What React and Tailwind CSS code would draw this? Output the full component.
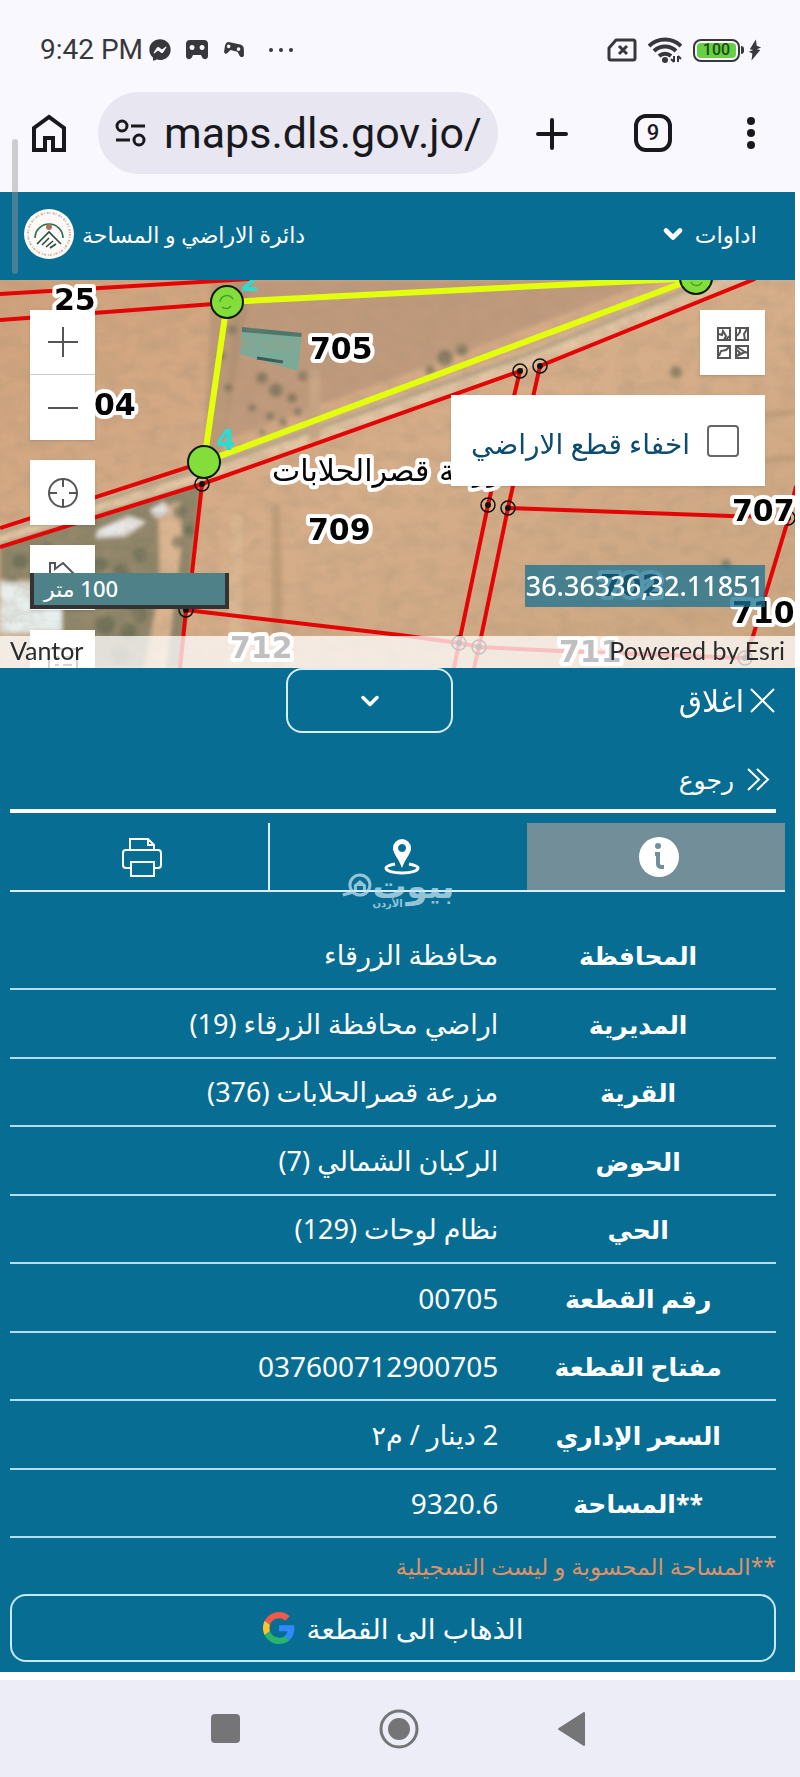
import { useState } from 'react';
import { ChevronDown } from 'lucide-react';
import { FaFacebookMessenger } from 'react-icons/fa';

const PARCEL_ROWS = [
  { label: 'المحافظة', value: 'محافظة الزرقاء' },
  { label: 'المديرية', value: 'اراضي محافظة الزرقاء (19)' },
  { label: 'القرية', value: 'مزرعة قصرالحلابات (376)' },
  { label: 'الحوض', value: 'الركبان الشمالي (7)' },
  { label: 'الحي', value: 'نظام لوحات (129)' },
  { label: 'رقم القطعة', value: '00705', numeric: true },
  { label: 'مفتاح القطعة', value: '037600712900705', numeric: true },
  { label: 'السعر الإداري', value: '2 دينار / م٢' },
  { label: '**المساحة', value: '9320.6', numeric: true },
];

const BOUNDARIES = [
  '0,14 250,-1',
  '0,40 227,23',
  '0,248 204,182',
  '0,267 202,204 520,91 488,225 459,363 454,388',
  '755,-1 540,86 508,228 479,367 474,388',
  '508,228 730,236 790,237',
  '796,206 788,240 753,356 745,378',
  '202,204 192,293 186,330 180,388',
  '186,330 400,355 459,363 479,367 560,371 745,378',
];

const MARKERS = [
  [202, 204],
  [186, 330],
  [520, 91],
  [540, 86],
  [488, 225],
  [508, 228],
  [459, 363],
  [479, 367],
  [788, 238],
  [745, 378],
];

const PARCEL_LABELS = [
  { x: 54, y: 30, text: '25' },
  { x: 310, y: 79, text: '705' },
  { x: 94, y: 135, text: '04' },
  { x: 308, y: 260, text: '709' },
  { x: 230, y: 378, text: '712' },
  { x: 732, y: 241, text: '707' },
  { x: 600, y: 316, text: '702' },
  { x: 732, y: 343, text: '710' },
  { x: 559, y: 382, text: '711' },
];

const TREES = [
  [20, 282, 8], [48, 270, 7], [70, 290, 9], [12, 305, 7], [100, 285, 8], [122, 292, 9], [140, 275, 7],
  [108, 310, 8], [130, 320, 9], [148, 305, 7], [105, 345, 10], [128, 352, 9], [140, 335, 8], [120, 375, 10],
  [262, 98, 6], [276, 110, 7], [292, 118, 5], [303, 96, 5], [228, 108, 4], [252, 128, 4], [270, 136, 4],
  [232, 50, 5], [222, 76, 4], [298, 132, 4], [283, 142, 4], [262, 152, 3], [180, 232, 7], [190, 250, 6],
  [178, 262, 6], [445, 78, 8], [462, 70, 6], [430, 90, 5], [676, 92, 6], [726, 284, 5],
];

function StatusBar() {
  return (
    <div className="flex h-24 items-center justify-between pl-10 pr-[38px] pt-1 text-[#38383c]">
      <div className="flex items-center">
        <span className="text-[28px] leading-8">9:42 PM</span>
        <FaFacebookMessenger className="ml-[6px] h-[22px] w-[22px]" />
        <svg className="ml-[14px] h-5 w-6" viewBox="0 0 24 20" fill="currentColor">
          <path
            fillRule="evenodd"
            d="M5 0h14a4 4 0 0 1 4 4v12c0 4-5 4-6 1l-1-2H8l-1 2c-1 3-6 3-6-1V4a4 4 0 0 1 4-4ZM7 5a2.500 2.500 0 1 0 .1 0ZM17 5a2.500 2.500 0 1 0 .1 0Z"
          />
        </svg>
        <svg className="ml-[14px] h-[18px] w-[22px]" viewBox="0 0 24 20" fill="currentColor">
          <path
            fillRule="evenodd"
            d="M6 1l13 3c3 1 4 3 4 6v6c-1 3-4 2-5 0l-2-4-8-2-3 3c-2 2-4 1-4-1l1-7c1-3 2-4 4-4ZM6 4a2 2 0 1 0 .1 0ZM17 7a2 2 0 1 0 .1 0Z"
          />
        </svg>
        <svg className="ml-[22px] h-5 w-7" viewBox="0 0 28 20" fill="currentColor">
          <circle cx="4" cy="10" r="2" />
          <circle cx="14" cy="10" r="2" />
          <circle cx="24" cy="10" r="2" />
        </svg>
      </div>
      <div className="flex items-center">
        <svg className="h-6 w-[30px]" viewBox="0 0 30 24" fill="none" stroke="currentColor" strokeWidth="3">
          <path d="M9 2h17a2 2 0 0 1 2 2v16a2 2 0 0 1-2 2H4a2 2 0 0 1-2-2v-10Z" strokeLinejoin="round" />
          <path d="M12 8l8 8M20 8l-8 8" />
        </svg>
        <svg className="ml-[11px] h-[26px] w-[34px]" viewBox="0 0 34 26" fill="none" stroke="currentColor" strokeWidth="4">
          <path d="M1 9a23 23 0 0 1 32 0" />
          <path d="M6 14a16 16 0 0 1 22 0" />
          <path d="M11 19a9 9 0 0 1 12 0" />
          <circle cx="17" cy="23" r="3" fill="currentColor" stroke="none" />
          <path d="M26 19v6M30 19v6" strokeWidth="2" />
          <path d="M23 22l3 3M33 22l-3-3" strokeWidth="2" />
        </svg>
        <div className="ml-[11px] flex h-[23px] w-[47px] items-center justify-center rounded-lg border-[2px] border-[#38383c] p-[2px]">
          <span className="flex h-full w-full items-center justify-center rounded bg-[#67cf43] text-base leading-4 font-medium text-[#1d4a14]">
            100
          </span>
        </div>
        <span className="ml-px h-2 w-[3px] rounded-r bg-[#38383c]" />
        <svg className="ml-1 h-6 w-[14px]" viewBox="0 0 16 24" fill="currentColor">
          <path d="M9 0L2 11l4 1-5 2 4 2-1 8 10-12-4-1 5-2-5-2Z" />
        </svg>
      </div>
    </div>
  );
}

function BrowserBar() {
  return (
    <div className="flex h-24 items-start text-[#19191d]">
      <button type="button" aria-label="Home" className="ml-8 mt-[18px]">
        <svg className="h-10 w-[34px]" viewBox="0 0 34 40" fill="none" stroke="currentColor" strokeWidth="4">
          <path d="M2 36V14L17 3l15 11v22H21V24h-8v12Z" />
        </svg>
      </button>
      <div className="ml-8 -mt-1 flex h-[82px] min-w-0 flex-1 items-center rounded-full bg-[#e7e6f1] pl-4 pr-[10px]">
        <svg className="h-7 w-8 shrink-0" viewBox="0 0 32 28" fill="none" stroke="currentColor" strokeWidth="3">
          <circle cx="8" cy="7" r="5" />
          <path d="M17 7h14M2 21h14" />
          <circle cx="25" cy="21" r="5" />
        </svg>
        <input
          type="text"
          aria-label="Address"
          defaultValue="maps.dls.gov.jo/"
          className="ml-[18px] min-w-0 flex-1 bg-transparent text-[43px] leading-[56px] outline-none"
        />
      </div>
      <button type="button" aria-label="New tab" className="ml-9 mt-5">
        <svg className="h-9 w-9" viewBox="0 0 36 36" stroke="currentColor" strokeWidth="4" strokeLinecap="round">
          <path d="M4 18h28M18 4v28" />
        </svg>
      </button>
      <button
        type="button"
        className="ml-16 mt-[18px] flex h-[38px] w-[38px] items-center justify-center rounded-xl border-[4px] border-current text-[22px] leading-6 font-medium"
      >
        9
      </button>
      <button type="button" aria-label="Menu" className="ml-[73px] mr-[43px] mt-[19px]">
        <svg className="h-9 w-3" viewBox="0 0 12 36" fill="currentColor">
          <circle cx="6" cy="6" r="4" />
          <circle cx="6" cy="18" r="4" />
          <circle cx="6" cy="30" r="4" />
        </svg>
      </button>
    </div>
  );
}

function DepartmentLogo() {
  return (
    <svg className="h-[50px] w-[50px]" viewBox="0 0 50 50" fill="none">
      <circle cx="25" cy="25" r="25" fill="#fbfaf6" />
      <circle cx="25" cy="25" r="21" stroke="#c49a8c" strokeWidth="2" strokeDasharray="2 1 1 2" opacity=".7" />
      <path d="M11 29a14 14 0 1 1 28 0" stroke="#2f6b52" strokeWidth="1.600" />
      <circle cx="25" cy="18" r="3" fill="#a9745c" />
      <path d="M13 35l12-12 12 12M18 36l7-7M22 38l7-6M26 39l6-4" stroke="#2c4c44" strokeWidth="1.600" />
    </svg>
  );
}

function SiteHeader() {
  return (
    <header dir="rtl" className="flex h-[88px] items-center justify-between bg-[#076d93] pb-1 pl-6 pr-[38px] text-white">
      <button type="button" className="flex items-center gap-2 text-[23px] leading-8">
        اداوات
        <ChevronDown className="h-7 w-7" strokeWidth={4} />
      </button>
      <div className="flex items-center gap-2 text-[22px] leading-8">
        <span>دائرة الاراضي و المساحة</span>
        <DepartmentLogo />
      </div>
    </header>
  );
}

function Aerial() {
  return (
    <svg className="absolute inset-0 h-full w-full" viewBox="0 0 796 388" preserveAspectRatio="xMinYMin slice">
      <defs>
        <filter id="soil" x="0" y="0" width="100%" height="100%">
          <feTurbulence type="fractalNoise" baseFrequency="0.05 0.07" numOctaves="4" seed="8" />
          <feColorMatrix values="0 0 0 0 .42  0 0 0 0 .3  0 0 0 0 .2  1.600 0 0 0 -.62" />
        </filter>
        <filter id="soft">
          <feGaussianBlur stdDeviation="2" />
        </filter>
        <linearGradient id="ground" x1="0" y1="0" x2="1" y2="1">
          <stop offset="0" stopColor="#cfa27c" />
          <stop offset=".5" stopColor="#d6ae89" />
          <stop offset="1" stopColor="#cba681" />
        </linearGradient>
      </defs>
      <rect width="796" height="388" fill="url(#ground)" />
      <g filter="url(#soft)">
        <path d="M235 0h420L400 96 225 160Z" fill="#b39077" opacity=".6" />
        <path d="M212 0h40l-30 175-18 4Z" fill="#a48a6b" opacity=".5" />
        <path d="M0 264L202 202 180 388H0Z" fill="#8d8468" />
        <path d="M0 300h62v88H0Z" fill="#cdb598" />
        <path d="M158 228l22-6 2 40-16 126h-22l16-80Z" fill="#d9b490" />
        <path d="M232 235l10 0 0 153h-14Z" fill="#dcbb97" opacity=".7" />
        <path d="M272 225l8 0 4 163h-12Z" fill="#ab8d68" opacity=".5" />
        <path d="M-5 257L203 193 525 80 760-14" fill="none" stroke="#e2c5a3" strokeWidth="17" />
        <path d="M-5 254L203 188 525 75 760-20" fill="none" stroke="#8b8368" strokeWidth="4" opacity=".7" />
        <path d="M310 90l10 0 0 70-12 3Z" fill="#c9a785" />
        <path d="M640 148l156-16M620 190l176-12" stroke="#a98a5f" strokeWidth="3" opacity=".6" />
        {TREES.map(([x, y, r]) => (
          <circle key={`${x}-${y}`} cx={x} cy={y} r={r} fill="#5f6650" opacity=".6" />
        ))}
        <path d="M98 250l30-14 18 6-20 14-30 2ZM150 230l14-8 6 10-14 6Z" fill="#e8e6e4" />
        <path d="M0 302l44 2 18 12v36H0Z" fill="#e6efee" />
      </g>
      <path d="M242 47l60 6-4 38-58-17Z" fill="#79ab99" />
      <path d="M242 47l60 6-1 4-59-5Z" fill="#4e766b" />
      <path d="M257 78l26 4" stroke="#3e5a55" strokeWidth="3" />
      <rect width="796" height="388" filter="url(#soil)" opacity=".45" />
    </svg>
  );
}

function ParcelLayer() {
  return (
    <svg className="absolute inset-0 h-full w-full" viewBox="0 0 796 388" preserveAspectRatio="xMinYMin slice">
      <g fill="none" stroke="#e30505" strokeWidth="4">
        {BOUNDARIES.map((points) => (
          <polyline key={points} points={points} />
        ))}
      </g>
      {MARKERS.map(([x, y]) => (
        <g key={`${x}-${y}`}>
          <circle cx={x} cy={y} r="7" fill="none" stroke="#111" strokeWidth="1.500" />
          <circle cx={x} cy={y} r="3" fill="#111" />
        </g>
      ))}
      <path d="M204 182L227 22 696-2Z" fill="none" stroke="#e2ff0c" strokeWidth="6" />
      <g fill="#83dd3a" stroke="#0e1a08" strokeWidth="2">
        <circle cx="227" cy="22" r="16" />
        <circle cx="204" cy="182" r="16" />
        <circle cx="696" cy="-2" r="16" />
      </g>
      <path d="M220 22a7 7 0 0 1 13-3M222 27a6 6 0 0 0 9-1M691 2a6 6 0 0 0 11 0" fill="none" stroke="#4ba02b" strokeWidth="1.500" />
      <g className="font-['DejaVu_Sans'] text-[28px] font-bold" fill="#2edbd3">
        <text x="240" y="11">2</text>
        <text x="216" y="170">4</text>
      </g>
      <g
        className="font-['DejaVu_Sans'] text-[30px] font-bold"
        fill="#050505"
        stroke="#fff"
        strokeWidth="8"
        strokeLinejoin="round"
        paintOrder="stroke"
      >
        {PARCEL_LABELS.map(({ x, y, text }) => (
          <text key={text} x={x} y={y}>
            {text}
          </text>
        ))}
        <text x="272" y="201" className="text-[30px] font-normal">
          مزرعة قصرالحلابات
        </text>
      </g>
    </svg>
  );
}

function MapButton({ label, children }) {
  return (
    <button type="button" aria-label={label} className="flex h-[65px] w-[65px] items-center justify-center bg-white text-[#555]">
      <svg className="h-9 w-9" viewBox="0 0 36 36" fill="none" stroke="currentColor" strokeWidth="2">
        {children}
      </svg>
    </button>
  );
}

function MapView() {
  const [hidden, setHidden] = useState(false);

  return (
    <section className="relative h-[388px] overflow-hidden">
      <Aerial />
      <ParcelLayer />

      <div className="absolute left-[30px] top-[30px] flex flex-col gap-5">
        <div className="divide-y divide-[#ccc] shadow">
          <MapButton label="Zoom in">
            <path d="M3 18h30M18 3v30" />
          </MapButton>
          <MapButton label="Zoom out">
            <path d="M3 18h30" />
          </MapButton>
        </div>
        <div className="shadow">
          <MapButton label="Locate">
            <circle cx="18" cy="18" r="14" />
            <path d="M18 4v8M18 24v8M4 18h8M24 18h8" />
          </MapButton>
        </div>
        <div className="shadow">
          <MapButton label="Default extent">
            <path d="M5 18V3h5v6l8-6 14 14M8 16v16h7v-9h7v9h7V16" />
          </MapButton>
        </div>
        <div className="shadow">
          <MapButton label="Legend">
            <path d="M4 4h28v28H4ZM10 12h4M18 12h9M10 20h4M18 20h9" />
          </MapButton>
        </div>
      </div>

      <div className="absolute left-[30px] top-[293px] h-9 w-[199px] border-x-[4px] border-b-[4px] border-[#333] bg-[#4e8288] pl-[10px] text-[22px] leading-[30px] font-medium whitespace-nowrap text-white">
        <span dir="rtl" className="inline-block">
          100 متر
        </span>
      </div>

      <div className="absolute right-[30px] top-[30px] flex flex-col items-end gap-5">
        <div className="shadow">
          <MapButton label="Basemaps">
            <path d="M3 3h12v12H3ZM21 3h12v12H21ZM3 21h12v12H3ZM21 21h12v12H21Z" />
            <path d="M4 9l3 1 1-4 3 5-2 4M11 15l3-4M25 3v4l-3 4M32 4l-3 5 1 6M4 31l2-5 5-1 4-4M22 22l8 5 3 1M22 31l8-4M22 25l3 3-3 3" />
          </MapButton>
        </div>
        <label dir="rtl" className="flex h-[91px] w-[314px] items-center gap-[17px] bg-white pr-[26px] text-[28px] whitespace-nowrap text-[#0d4c70] shadow">
          <input
            type="checkbox"
            checked={hidden}
            onChange={(e) => setHidden(e.target.checked)}
            className="h-8 w-8 shrink-0 appearance-none rounded border-2 border-[#666] bg-white checked:bg-[#076d93]"
          />
          <span className="pt-1">اخفاء قطع الاراضي</span>
        </label>
      </div>

      <div className="absolute right-[30px] top-[285px] bg-[#1a7192]/75 px-px text-[27px] leading-[42px] font-medium text-white">
        36.36336,32.11851
      </div>

      <div className="absolute inset-x-0 bottom-0 flex h-8 items-center justify-between bg-white/75 px-[10px] pb-1 font-[Lato] text-[25px] leading-7 text-[#2b2b2b]">
        <span>Vantor</span>
        <span>Powered by Esri</span>
      </div>
    </section>
  );
}

function Watermark() {
  return (
    <div dir="ltr" className="pointer-events-none absolute left-1/2 top-[50px] flex -translate-x-1/2 items-start text-[#c3e2f0] opacity-75">
      <svg className="h-6 w-8" viewBox="0 0 32 24" fill="none" stroke="currentColor" strokeWidth="3">
        <circle cx="19" cy="12" r="10" />
        <path d="M12 19l-10 3" />
        <path d="M13 12l6-5 6 5v5h-3v-4h-6v4h-3Z" fill="currentColor" stroke="none" />
      </svg>
      <span className="flex flex-col">
        <span className="text-[34px] leading-6 font-bold">بيوت</span>
        <span className="text-[10px] leading-3 font-bold">الأردن</span>
      </span>
    </div>
  );
}

function Tabs() {
  return (
    <div className="relative mr-[10px] ml-[10px] mt-[10px]">
      <div className="grid h-[69px] grid-cols-3 border-b-2 border-[#d9edf6]">
        <button type="button" aria-label="معلومات" className="flex items-center justify-center bg-[#718e99] pl-[6px]">
          <svg className="h-10 w-10" viewBox="0 0 40 40" fill="none">
            <circle cx="20" cy="20" r="20" fill="#fff" />
            <circle cx="19" cy="9" r="3" fill="#718e99" />
            <path d="M16 17h3v10q0 3 4 3h2" stroke="#718e99" strokeWidth="4" />
          </svg>
        </button>
        <button type="button" aria-label="الموقع" className="flex items-center justify-center border-l-2 border-[#d9edf6] pl-[6px]">
          <svg className="h-9 w-9" viewBox="0 0 36 36" fill="none">
            <path d="M11 25c-5 1-9 2-9 4 0 3 7 5 16 5s16-2 16-5c0-2-4-3-9-4" stroke="#fff" strokeWidth="3" />
            <path
              fillRule="evenodd"
              fill="#fff"
              d="M18 0a9 9 0 0 1 9 9c0 6-5 9-9 20C14 18 9 15 9 9a9 9 0 0 1 9-9Zm0 5a4 4 0 1 0 .1 0Z"
            />
          </svg>
        </button>
        <button type="button" aria-label="طباعة" className="flex items-center justify-center pl-[6px]">
          <svg className="h-10 w-[42px]" viewBox="0 0 42 40" fill="none" stroke="#fff" strokeWidth="2">
            <path d="M9 12V2h18l6 6v4M27 2v6h6" />
            <path d="M9 31H5a3 3 0 0 1-3-3V16a3 3 0 0 1 3-3h32a3 3 0 0 1 3 3v12a3 3 0 0 1-3 3h-4" />
            <path d="M10 25h23v14H10Z" />
          </svg>
        </button>
      </div>
      <Watermark />
    </div>
  );
}

function GoogleIcon() {
  return (
    <svg className="h-8 w-8" viewBox="0 0 48 48">
      <path fill="#f2594b" d="M24 9.500c3.500 0 6.700 1.200 9.200 3.600l6.900-6.900C35.900 2.400 30.500 0 24 0 14.600 0 6.500 5.400 2.600 13.200l8 6.200C12.400 13.700 17.700 9.500 24 9.500z" />
      <path fill="#2f8bfd" d="M47 24.600c0-1.600-.2-3.100-.4-4.600H24v9h12.900c-.6 3-2.300 5.500-4.800 7.200l7.700 6C44.400 38 47 31.800 47 24.600z" />
      <path fill="#fbc62c" d="M10.500 28.600c-.5-1.500-.8-3-.8-4.600s.3-3.100.8-4.600l-8-6.200C.9 16.500 0 20.100 0 24s.9 7.500 2.600 10.800z" />
      <path fill="#27b46c" d="M24 48c6.500 0 11.900-2.100 15.900-5.800l-7.700-6c-2.200 1.500-4.900 2.300-8.200 2.300-6.300 0-11.600-4.200-13.500-9.900l-8 6.200C6.500 42.600 14.600 48 24 48z" />
    </svg>
  );
}

function DetailsPanel() {
  return (
    <section dir="rtl" className="bg-[#076d93] pb-[10px] text-white">
      <div className="relative flex h-[65px] items-center pr-5">
        <button type="button" className="flex items-center gap-[6px] text-[30px] leading-8">
          <svg className="h-[25px] w-[25px]" viewBox="0 0 25 25" stroke="#fff" strokeWidth="2">
            <path d="M1 1l23 23M24 1L1 24" />
          </svg>
          اغلاق
        </button>
        <button
          type="button"
          aria-label="تصغير"
          className="absolute inset-y-0 left-[36%] flex w-[21%] items-center justify-center rounded-2xl border-2 border-[#d9edf6]"
        >
          <ChevronDown className="h-7 w-7" strokeWidth={3} />
        </button>
      </div>

      <div className="ml-[10px] mr-[19px] flex h-20 items-center border-b-[4px] border-white pr-[6px] pt-4">
        <button type="button" className="flex items-center gap-3 text-[25px] leading-8">
          <svg className="h-[23px] w-6" viewBox="0 0 24 23" fill="none" stroke="#fff" strokeWidth="2">
            <path d="M2 1l11 10.500L2 22M11 1l11 10.500L11 22" />
          </svg>
          رجوع
        </button>
      </div>

      <Tabs />

      <div className="ml-[10px] mr-[19px] mt-[29px]">
        <table className="w-full border-collapse leading-9">
          <tbody>
            {PARCEL_ROWS.map(({ label, value, numeric }) => (
              <tr key={label} className="border-b-2 border-[#b4deee] odd:h-[68px] even:h-[69px]">
                <th scope="row" className="w-[36%] p-0 text-center text-[25px] font-bold whitespace-nowrap">
                  {label}
                </th>
                <td className={numeric ? 'p-0 pr-[2px] text-[28px]' : 'p-0 pr-[2px] text-[27px]'}>{value}</td>
              </tr>
            ))}
          </tbody>
        </table>
        <p className="pt-3 text-[23px] leading-8 text-[#de9268]">**المساحة المحسوبة و ليست التسجيلية</p>
        <button
          type="button"
          className="mt-3 flex h-[68px] w-full items-center justify-center gap-3 rounded-2xl border-2 border-[#c5eaf8] text-[28px] leading-8"
        >
          الذهاب الى القطعة
          <GoogleIcon />
        </button>
      </div>
    </section>
  );
}

function NavigationBar() {
  return (
    <nav className="flex h-[97px] items-center justify-center gap-[139px] bg-[#ecedf7] pr-[3px] text-[#757578]">
      <button type="button" aria-label="Recent apps" className="h-[29px] w-[29px] rounded bg-current" />
      <button type="button" aria-label="Home">
        <svg className="h-10 w-10" viewBox="0 0 40 40">
          <circle cx="20" cy="20" r="18" fill="none" stroke="currentColor" strokeWidth="3" />
          <circle cx="20" cy="20" r="11" fill="currentColor" />
        </svg>
      </button>
      <button type="button" aria-label="Back">
        <svg className="h-[34px] w-7" viewBox="0 0 28 34" fill="currentColor" stroke="currentColor" strokeWidth="2" strokeLinejoin="round">
          <path d="M26 1v32L1 17Z" />
        </svg>
      </button>
    </nav>
  );
}

export default function App() {
  return (
    <div className="relative bg-[#f8f8fe] font-[Roboto,sans-serif]">
      <StatusBar />
      <BrowserBar />
      <main className="border-b-[8px] border-r-[5px] border-white font-['Noto_Sans','DejaVu_Sans',sans-serif]">
        <SiteHeader />
        <MapView />
        <DetailsPanel />
      </main>
      <NavigationBar />
      <div className="absolute left-3 top-[139px] h-[135px] w-[6px] rounded-full bg-[#999]/45" />
    </div>
  );
}
